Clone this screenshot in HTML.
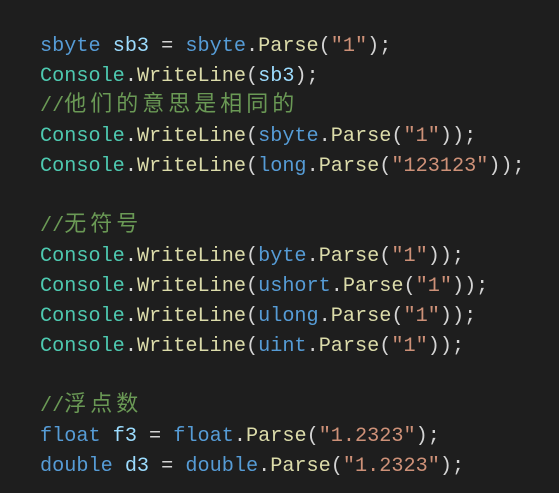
<!DOCTYPE html>
<html><head><meta charset="utf-8"><style>
body{margin:0;background:#1e1e1e;width:559px;height:493px;overflow:hidden}
.p{position:absolute;left:40px;top:32px;font-family:"Liberation Mono","Noto Sans CJK SC",monospace;font-size:20.2px;color:#d4d4d4}
.p div{height:30px;line-height:30px;white-space:pre}
.k{color:#569cd6}.v{color:#9cdcfe}.c{color:#4ec9b0}.m{color:#dcdcaa}.s{color:#ce9178}.g{color:#6a9955}
.z{font-family:"Noto Sans CJK SC",sans-serif;font-size:22px;letter-spacing:4px;line-height:20px}
</style></head><body><div class="p">
<div><span class="k">sbyte</span> <span class="v">sb3</span> = <span class="k">sbyte</span>.<span class="m">Parse</span>(<span class="s">"1"</span>);</div>
<div><span class="c">Console</span>.<span class="m">WriteLine</span>(<span class="v">sb3</span>);</div>
<div><span class="g">//<span class="z">他们的意思是相同的</span></span></div>
<div><span class="c">Console</span>.<span class="m">WriteLine</span>(<span class="k">sbyte</span>.<span class="m">Parse</span>(<span class="s">"1"</span>));</div>
<div><span class="c">Console</span>.<span class="m">WriteLine</span>(<span class="k">long</span>.<span class="m">Parse</span>(<span class="s">"123123"</span>));</div>
<div></div>
<div><span class="g">//<span class="z">无符号</span></span></div>
<div><span class="c">Console</span>.<span class="m">WriteLine</span>(<span class="k">byte</span>.<span class="m">Parse</span>(<span class="s">"1"</span>));</div>
<div><span class="c">Console</span>.<span class="m">WriteLine</span>(<span class="k">ushort</span>.<span class="m">Parse</span>(<span class="s">"1"</span>));</div>
<div><span class="c">Console</span>.<span class="m">WriteLine</span>(<span class="k">ulong</span>.<span class="m">Parse</span>(<span class="s">"1"</span>));</div>
<div><span class="c">Console</span>.<span class="m">WriteLine</span>(<span class="k">uint</span>.<span class="m">Parse</span>(<span class="s">"1"</span>));</div>
<div></div>
<div><span class="g">//<span class="z">浮点数</span></span></div>
<div><span class="k">float</span> <span class="v">f3</span> = <span class="k">float</span>.<span class="m">Parse</span>(<span class="s">"1.2323"</span>);</div>
<div><span class="k">double</span> <span class="v">d3</span> = <span class="k">double</span>.<span class="m">Parse</span>(<span class="s">"1.2323"</span>);</div>
</div></body></html>
